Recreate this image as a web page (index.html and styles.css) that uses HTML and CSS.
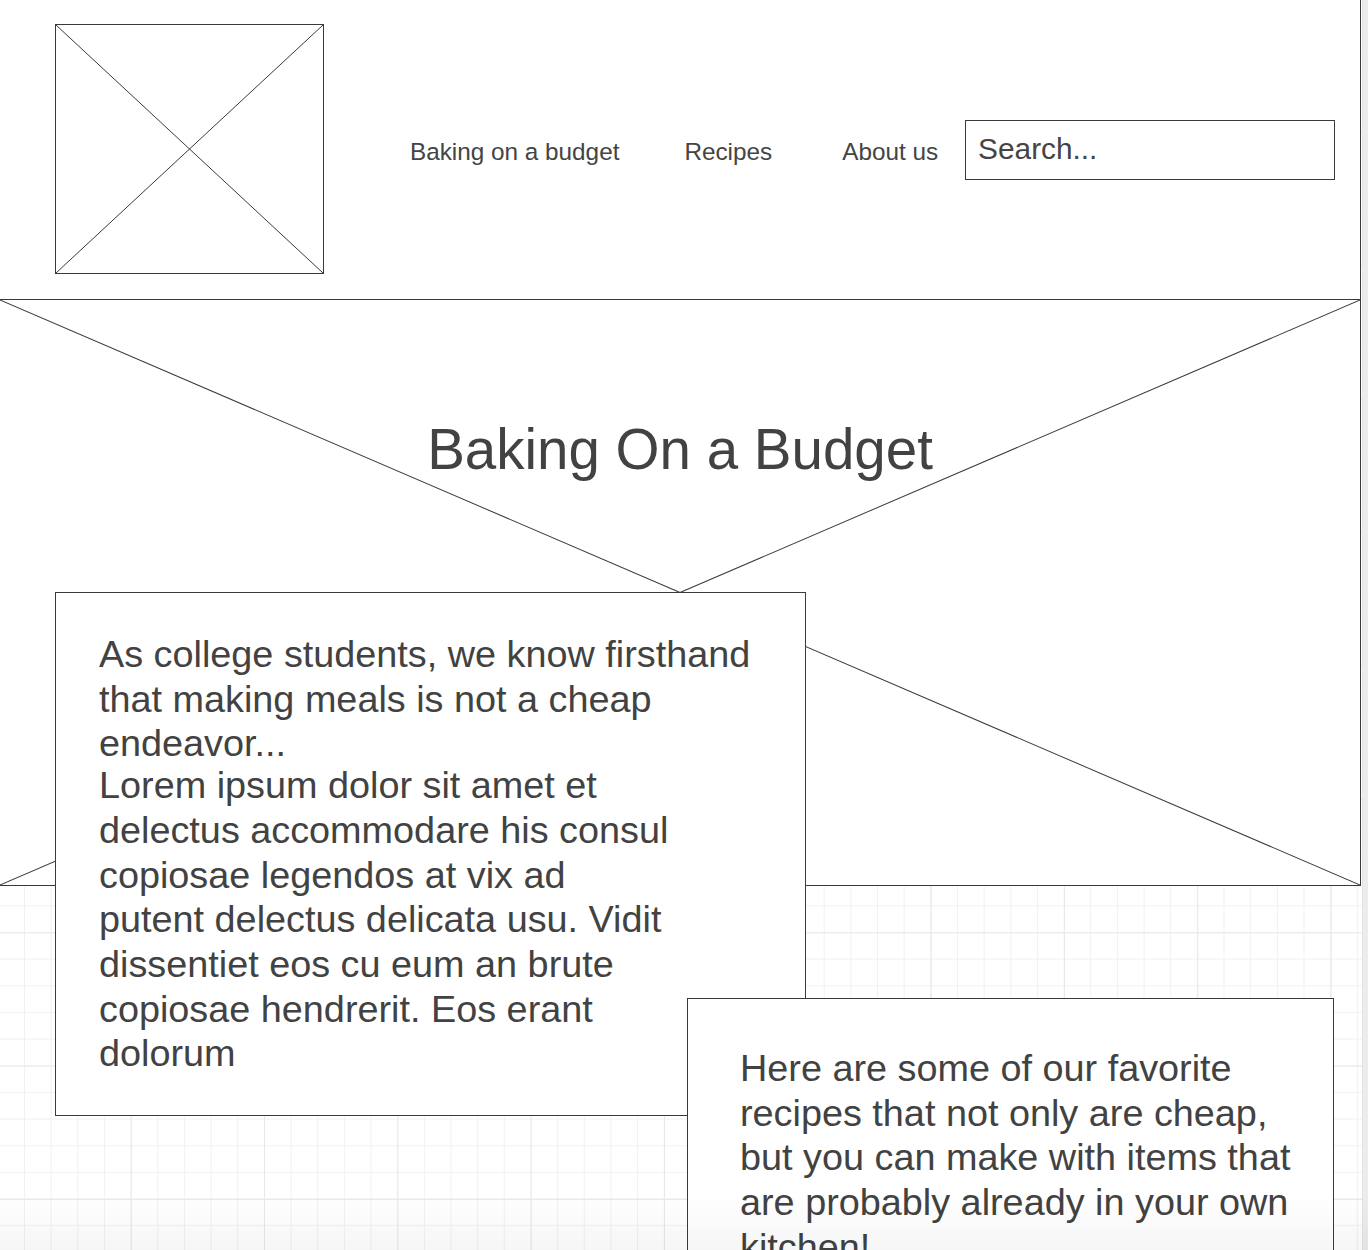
FILE: index.html
```html
<!DOCTYPE html>
<html lang="en">
<head>
<meta charset="utf-8">
<title>Baking On a Budget</title>
<link rel="stylesheet" href="styles.css">
</head>
<body>
<div class="page">
  <div class="canvas">
    <div class="frame">
      <header class="header">
        <div class="logo">
          <svg class="xsvg" viewBox="0 0 100 100" preserveAspectRatio="none">
            <line x1="0" y1="0" x2="100" y2="100"/>
            <line x1="100" y1="0" x2="0" y2="100"/>
          </svg>
        </div>
        <nav class="nav">
          <a class="nav-link" href="#">Baking on a budget</a>
          <a class="nav-link" href="#">Recipes</a>
          <a class="nav-link nav-about" href="#">About us</a>
        </nav>
        <input class="search" type="text" placeholder="Search...">
      </header>
      <section class="hero">
        <svg class="xsvg hero-x" viewBox="0 0 100 100" preserveAspectRatio="none">
          <line x1="0" y1="0" x2="100" y2="100"/>
          <line x1="100" y1="0" x2="0" y2="100"/>
        </svg>
        <h1 class="hero-title">Baking On a Budget</h1>
      </section>
    </div>
    <main class="cards">
      <div class="card card-intro">
        <p class="card-text">As college students, we know firsthand<br>that making meals is not a cheap<br>endeavor...</p>
        <p class="card-text card-lorem">Lorem ipsum dolor sit amet et<br>delectus accommodare his consul<br>copiosae legendos at vix ad<br>putent delectus delicata usu. Vidit<br>dissentiet eos cu eum an brute<br>copiosae hendrerit. Eos erant<br>dolorum</p>
      </div>
      <div class="card card-recipes">
        <p class="card-text">Here are some of our favorite<br>recipes that not only are cheap,<br>but you can make with items that<br>are probably already in your own<br>kitchen!</p>
      </div>
    </main>
  </div>
  <div class="edge"></div>
</div>
<div class="bottom-fade"></div>
</body>
</html>
```

FILE: styles.css
```css
html, body {
  margin: 0;
  padding: 0;
  overflow: hidden;
  height: 1250px;
}
body {
  font-family: "Liberation Sans", Arial, sans-serif;
  color: #424242;
  background: #fff;
}
.page {
  display: flex;
  width: 1368px;
  height: 1250px;
}
.canvas {
  width: 1362px;
  flex: none;
  background-color: #fff;
  background-image:
    linear-gradient(to right, #e8e8e8 1px, transparent 1px),
    linear-gradient(to bottom, #e8e8e8 1px, transparent 1px),
    linear-gradient(to right, #f1f1f1 1px, transparent 1px),
    linear-gradient(to bottom, #f1f1f1 1px, transparent 1px);
  background-size: 133.333px 133.333px, 133.333px 133.333px, 26.667px 26.667px, 26.667px 26.667px;
  background-position: -2.667px -1px, -2.667px -1px, -2.667px -1px, -2.667px -1px;
}
.edge {
  flex: 1;
  background: #ececec;
  border-left: 1px solid #e4e4e4;
}
.frame {
  width: 1360px;
  background: #fff;
  border-right: 1px solid #3a3a3a;
}
.header {
  display: flex;
  align-items: center;
  height: 299px;
  padding-left: 55px;
  box-sizing: border-box;
}
.logo {
  width: 269px;
  height: 250px;
  box-sizing: border-box;
  border: 1px solid #3a3a3a;
  flex: none;
  margin-top: -1px;
}
.xsvg {
  display: block;
  width: 100%;
  height: 100%;
}
.xsvg line {
  stroke: #3a3a3a;
  stroke-width: 1;
  vector-effect: non-scaling-stroke;
}
.nav {
  display: flex;
  gap: 65px;
  margin-left: 86px;
  margin-top: 5px;
}
.nav-link {
  font-size: 24.3px;
  color: #444;
  text-decoration: none;
  white-space: nowrap;
}
.nav-about {
  margin-left: 5px;
}
.search {
  margin-left: 27px;
  width: 370px;
  height: 60px;
  box-sizing: border-box;
  border: 1px solid #3a3a3a;
  padding: 0 0 3px 12px;
  font-family: "Liberation Sans", Arial, sans-serif;
  font-size: 29.8px;
  color: #444;
  background: #fff;
  outline: none;
  margin-top: 1px;
}
.search::placeholder {
  color: #444;
  opacity: 1;
}
.hero {
  display: grid;
  height: 587px;
  box-sizing: border-box;
  border-top: 1px solid #3a3a3a;
  border-bottom: 1px solid #3a3a3a;
}
.hero-x, .hero-title {
  grid-area: 1 / 1;
}
.hero-title {
  margin: 0;
  align-self: start;
  justify-self: center;
  padding-top: 122px;
  font-size: 56.5px;
  font-weight: normal;
  line-height: 1;
  color: #424242;
}
.cards {
  display: grid;
  margin-top: -294px;
}
.card {
  grid-area: 1 / 1;
  background: #fff;
  border: 1px solid #3a3a3a;
  box-sizing: border-box;
  justify-self: start;
  align-self: start;
}
.card-intro {
  margin-left: 55px;
  width: 751px;
  height: 524px;
  padding: 39px 0 0 43px;
}
.card-recipes {
  margin-left: 687px;
  margin-top: 406px;
  width: 647px;
  height: 420px;
  padding: 47px 0 0 52px;
}
.card-text {
  margin: 0;
  font-size: 37.8px;
  line-height: 44.7px;
  white-space: nowrap;
  color: #424242;
}
.card-lorem {
  margin-top: -3px;
}
.bottom-fade {
  position: fixed;
  left: 0;
  right: 0;
  bottom: 0;
  height: 56px;
  pointer-events: none;
  background: linear-gradient(to bottom, rgba(0,0,0,0), rgba(0,0,0,0.035));
}
```
